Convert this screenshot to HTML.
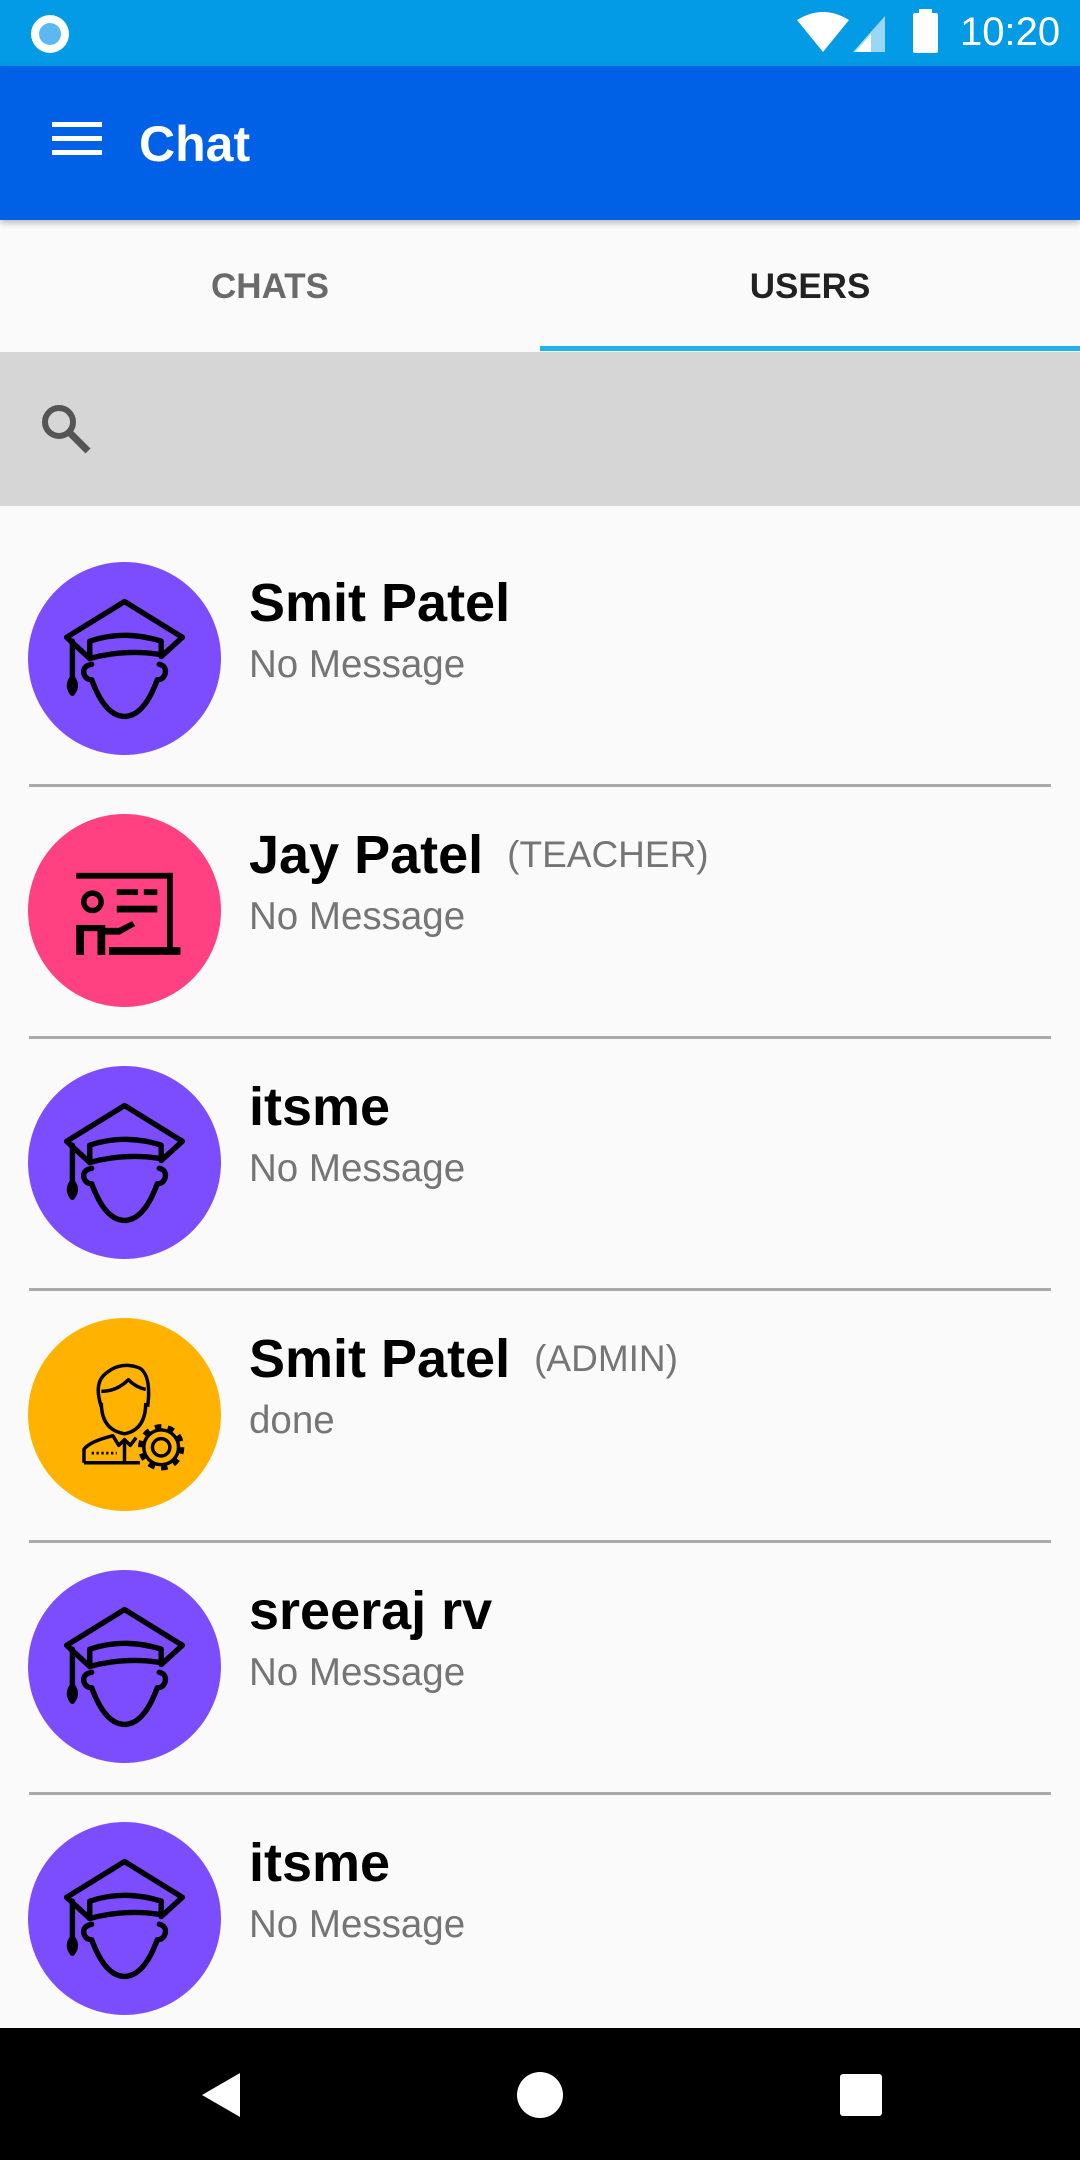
<!DOCTYPE html>
<html><head><meta charset="utf-8"><style>
*{margin:0;padding:0;box-sizing:border-box}
body{width:1080px;height:2160px;background:#fafafa;font-family:"Liberation Sans",sans-serif;position:relative;overflow:hidden}
.abs{position:absolute}
.row{position:absolute;left:0;width:1080px;height:252px}
.av{position:absolute;left:28px;top:26px;width:193px;height:193px;border-radius:50%}
.av svg{display:block}
.name{position:absolute;left:249px;font-weight:bold;font-size:54px;color:#000;white-space:nowrap}
.msg{position:absolute;left:249px;font-size:38.5px;color:#757575}
.tag{font-weight:normal;font-size:37px;color:#757575;margin-left:24px;vertical-align:6px}
.div{position:absolute;left:29px;width:1022px;height:3px;background:#aaa}
</style></head><body>
<div class="abs" style="left:0;top:0;width:1080px;height:66px;background:#039be5"></div>
<div class="abs" style="left:31px;top:15px;width:38px;height:38px;border-radius:50%;background:#fff"></div>
<div class="abs" style="left:39px;top:23px;width:22px;height:22px;border-radius:50%;background:#5cb8f0"></div>
<svg class="abs" style="left:795px;top:12px" width="100" height="42" viewBox="0 0 100 42"><path d="M2 8 Q28 -8 54 8 L28 40 Z" fill="#fff"/><path d="M58 40 L90 4 L90 40 Z" fill="#fff" opacity=".6"/><path d="M60 40 L76 22 L76 40Z" fill="#fff"/></svg>
<div class="abs" style="left:913px;top:13px;width:25px;height:40px;background:#fff;border-radius:2px"></div>
<div class="abs" style="left:919px;top:9px;width:13px;height:6px;background:#fff"></div>
<div class="abs" style="left:960px;top:10px;color:#fff;font-size:40px">10:20</div>
<div class="abs" style="left:0;top:66px;width:1080px;height:154px;background:#0060e6;box-shadow:0 3px 6px rgba(0,0,0,.25)"></div>
<div class="abs" style="left:52px;top:122px;width:50px;height:5px;background:#fff"></div>
<div class="abs" style="left:52px;top:136px;width:50px;height:5px;background:#fff"></div>
<div class="abs" style="left:52px;top:150px;width:50px;height:5px;background:#fff"></div>
<div class="abs" style="left:139px;top:115px;color:#fff;font-size:50px;font-weight:bold">Chat</div>
<div class="abs" style="left:0;top:267px;width:540px;text-align:center;font-size:35px;font-weight:bold;color:#6a6a6a">CHATS</div>
<div class="abs" style="left:540px;top:267px;width:540px;text-align:center;font-size:35px;font-weight:bold;color:#222">USERS</div>
<div class="abs" style="left:540px;top:346px;width:540px;height:5px;background:#1eb4e8"></div>
<div class="abs" style="left:0;top:352px;width:1080px;height:154px;background:#d6d6d6"></div>
<svg class="abs" style="left:38px;top:401px" width="56" height="56" viewBox="0 0 56 56"><circle cx="21" cy="21" r="14" fill="none" stroke="#555" stroke-width="6"/><path d="M31 31 L50 50" stroke="#555" stroke-width="7"/></svg>

<svg width="0" height="0" style="position:absolute"><defs>
<g id="grad" fill="none" stroke="#000" stroke-width="2.8" stroke-linejoin="round" stroke-linecap="round">
<path d="M20 39 L50 20.5 L80 39 L69 49 M20 39 L32 50"/>
<path d="M32 50 L32 41 Q50 35 69 41 L69 48 Q50 45 32 50Z"/>
<path d="M33 53 Q28 54 29 58 Q30 61 33 61 Q40 80 50 80 Q60 80 67 61 Q70 61 71 58 Q72 54 68 53"/>
<path d="M23 41 L23 60 M23 60 Q20 64 23 68 Q26 64 23 60"/>
</g>
<g id="teach" fill="#000">
<rect x="25" y="30.5" width="50" height="3"/><rect x="72" y="30.5" width="3" height="40"/>
<rect x="42" y="69" width="37" height="4"/>
<circle cx="33.4" cy="45.5" r="4.5" fill="none" stroke="#000" stroke-width="2.8"/>
<rect x="46" y="39" width="11" height="3"/><rect x="60" y="39" width="7" height="3"/><rect x="46" y="47.5" width="21" height="3.5"/>
<rect x="25" y="57.5" width="4" height="15.5"/><rect x="36" y="57.5" width="4" height="15.5"/><rect x="25" y="57.5" width="15" height="3.2"/>
<path d="M39 59 L47 59 L54 55.5 L55.5 58 L47.5 62.5 L39 62.5Z"/>
</g>
<g id="admin" fill="none" stroke="#000" stroke-width="1.8" stroke-linejoin="round">
<path d="M38 46 Q34 34 40 29 Q48 22 58 26 Q64 30 62 46"/>
<path d="M38 38 Q46 38 52 32 Q56 36 61 37"/>
<path d="M38 44 Q38 58 50 60 Q61 58 61 44"/>
<path d="M29 75 L29 68 Q32 64 44 61 L47 66 L50 63 L53 66 L56 62 M29 75 L58 75 M50 63 L50 75"/>
<path d="M33 70 L46 70" stroke-dasharray="1.2 1.3" stroke-width="1.4"/>
<circle cx="69" cy="67" r="4.5"/><circle cx="69" cy="67" r="9"/><circle cx="69" cy="67" r="10.5" stroke-width="3" stroke-dasharray="3.3 3.3"/>
</g>
</defs></svg>

<div class="row" style="top:536px"><div class="av" style="background:#7c4dff"><svg width="193" height="193" viewBox="0 0 100 100"><use href="#grad"/></svg></div><div class="name" style="top:36px">Smit Patel</div><div class="msg" style="top:107px">No Message</div><div class="div" style="top:248px"></div></div>
<div class="row" style="top:788px"><div class="av" style="background:#ff4081"><svg width="193" height="193" viewBox="0 0 100 100"><use href="#teach"/></svg></div><div class="name" style="top:36px">Jay Patel<span class="tag">(TEACHER)</span></div><div class="msg" style="top:107px">No Message</div><div class="div" style="top:248px"></div></div>
<div class="row" style="top:1040px"><div class="av" style="background:#7c4dff"><svg width="193" height="193" viewBox="0 0 100 100"><use href="#grad"/></svg></div><div class="name" style="top:36px">itsme</div><div class="msg" style="top:107px">No Message</div><div class="div" style="top:248px"></div></div>
<div class="row" style="top:1292px"><div class="av" style="background:#ffb300"><svg width="193" height="193" viewBox="0 0 100 100"><use href="#admin"/></svg></div><div class="name" style="top:36px">Smit Patel<span class="tag">(ADMIN)</span></div><div class="msg" style="top:107px">done</div><div class="div" style="top:248px"></div></div>
<div class="row" style="top:1544px"><div class="av" style="background:#7c4dff"><svg width="193" height="193" viewBox="0 0 100 100"><use href="#grad"/></svg></div><div class="name" style="top:36px">sreeraj rv</div><div class="msg" style="top:107px">No Message</div><div class="div" style="top:248px"></div></div>
<div class="row" style="top:1796px"><div class="av" style="background:#7c4dff"><svg width="193" height="193" viewBox="0 0 100 100"><use href="#grad"/></svg></div><div class="name" style="top:36px">itsme</div><div class="msg" style="top:107px">No Message</div></div>

<div class="abs" style="left:0;top:2028px;width:1080px;height:132px;background:#000"></div>
<svg class="abs" style="left:198px;top:2070px" width="46" height="50" viewBox="0 0 46 50"><path d="M42 3 L42 47 L4 25Z" fill="#fff"/></svg>
<div class="abs" style="left:517px;top:2072px;width:46px;height:46px;border-radius:50%;background:#fff"></div>
<div class="abs" style="left:840px;top:2074px;width:42px;height:42px;background:#fff;border-radius:3px"></div>
</body></html>
